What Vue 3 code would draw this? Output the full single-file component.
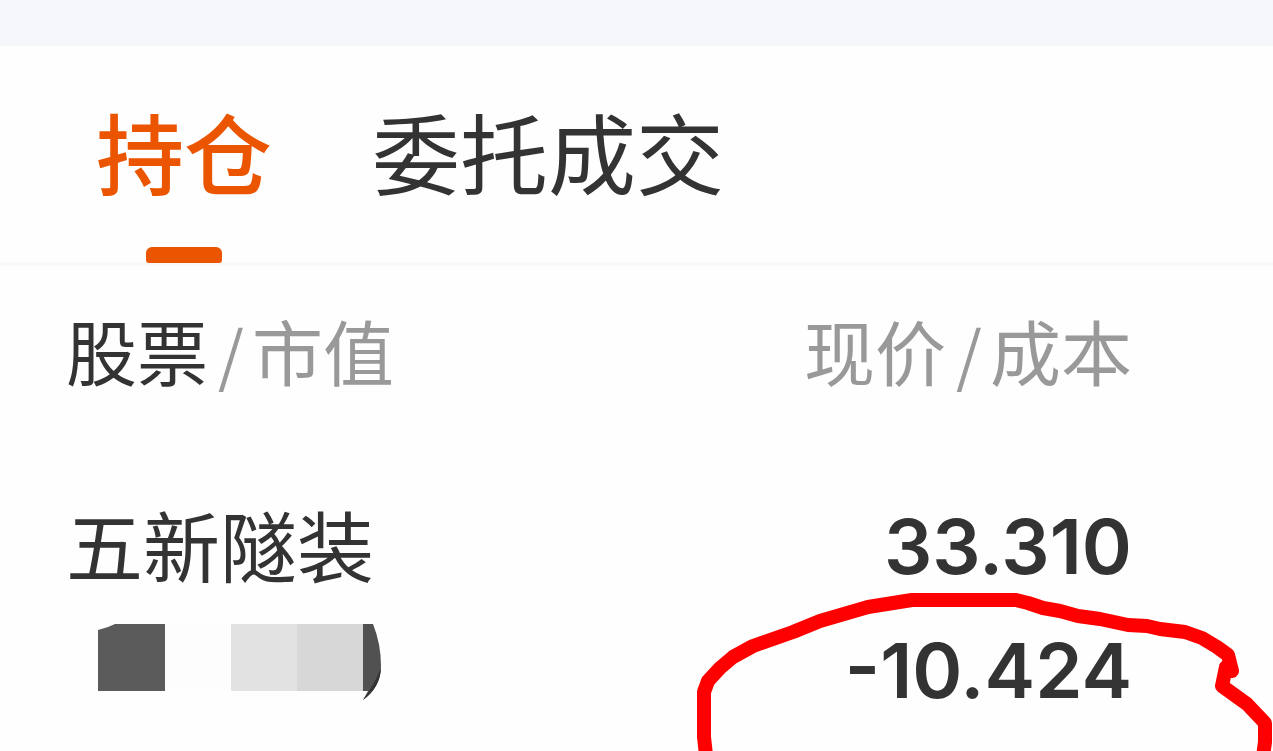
<script setup>
import { ref } from 'vue'

const tabs = ['持仓', '委托成交']
const active = ref(0)
const holdings = [{ name: '五新隧装', price: '33.310', cost: '-10.424' }]
</script>

<template>
  <main class="page">
    <div class="strip"></div>
    <nav class="tabs">
      <button
        v-for="(tab, i) in tabs"
        :key="tab"
        type="button"
        class="tab"
        :class="{ active: i === active }"
        @click="active = i"
      >
        {{ tab }}
      </button>
    </nav>
    <section class="holdings">
      <table class="table">
        <thead>
          <tr>
            <th scope="col"><span class="strong">股票</span><span class="slash">/</span>市值</th>
            <th scope="col" class="num">现价<span class="slash">/</span>成本</th>
          </tr>
        </thead>
        <tbody>
          <tr v-for="row in holdings" :key="row.name">
            <td>
              <div class="name">{{ row.name }}</div>
              <svg class="mosaic" viewBox="0 0 286 78" aria-hidden="true">
                <path d="M0 6L10 3L17 0H67V67H0Z" fill="#5b5b5b" />
                <path d="M67 0H133V67H67Z" fill="#fdfdfd" />
                <path d="M133 0H199V67H133Z" fill="#e2e2e2" />
                <path d="M199 0H265V67H199Z" fill="#d7d7d7" />
                <path d="M265 0H275Q283 20 283 42Q283 62 265 76L270 67H265Z" fill="#515151" />
                <path d="M283 44Q282 64 265 76Q276 61 283 44Z" fill="#333" />
              </svg>
            </td>
            <td class="num">
              <div class="figure">{{ row.price }}</div>
              <div class="figure">{{ row.cost }}</div>
            </td>
          </tr>
        </tbody>
      </table>
      <svg class="mark" viewBox="690 590 583 170" aria-hidden="true">
        <path
          d="M707 764L704 737V692L708 681L720 668L733 657L753 646L793 632L820 621L868 607L912 600H1016L1028 603L1043 608L1060 611L1078 616L1100 619L1128 625L1147 626L1160 629L1185 632L1202 638L1217 647L1228 655L1232 671L1226 667L1222 686L1247 704L1265 723V742L1262 764"
        />
      </svg>
    </section>
  </main>
</template>

<style>
body {
  margin: 0;
  background: #fefefe;
}
</style>

<style scoped>
.page {
  height: 100vh;
  overflow: hidden;
  background: #fefefe;
  color: #333;
  font-family: Inter, "Noto Sans CJK SC", sans-serif;
}
.strip {
  height: 46px;
  background: #f5f7fa;
}
.tabs {
  display: flex;
  gap: 100px;
  padding: 0 96px;
  border-bottom: 4px solid #f8f8f8;
}
.tab {
  position: relative;
  padding: 0 0 8px;
  border: 0;
  background: none;
  color: #333;
  font-family: "Noto Sans CJK SC", sans-serif;
  font-size: 88px;
  line-height: 208px;
  white-space: nowrap;
  cursor: pointer;
}
.tab.active {
  color: #eb5500;
  font-weight: 500;
}
.tab.active::after {
  content: "";
  position: absolute;
  left: 50%;
  bottom: -1px;
  width: 76px;
  height: 16px;
  margin-left: -38px;
  border-radius: 6px 6px 3px 3px;
  background: #eb5500;
}
.holdings {
  position: relative;
}
.table {
  width: 100%;
  border-collapse: collapse;
}
th,
td {
  padding: 0 0 0 66px;
  text-align: left;
  vertical-align: top;
}
.num {
  padding: 0 141px 0 0;
  text-align: right;
}
th {
  height: 218px;
  color: #999;
  font-family: "Noto Sans CJK SC", sans-serif;
  font-size: 71px;
  font-weight: 400;
  line-height: 166px;
  white-space: nowrap;
}
.strong {
  color: #333;
}
.slash {
  margin: 0 8px 0 10px;
  font-size: 66px;
}
.name {
  height: 140px;
  font-family: "Noto Sans CJK SC", sans-serif;
  font-size: 77px;
  line-height: 120px;
  white-space: nowrap;
}
.mosaic {
  display: block;
  width: 286px;
  height: 78px;
  margin-left: 32px;
}
.figure {
  font-size: 76px;
  font-weight: 600;
  line-height: 124px;
}
.mark {
  position: absolute;
  top: 324px;
  right: 0;
  width: 583px;
  height: 170px;
  pointer-events: none;
}
.mark path {
  fill: none;
  stroke: #f00;
  stroke-width: 14px;
  stroke-linejoin: round;
}
</style>
